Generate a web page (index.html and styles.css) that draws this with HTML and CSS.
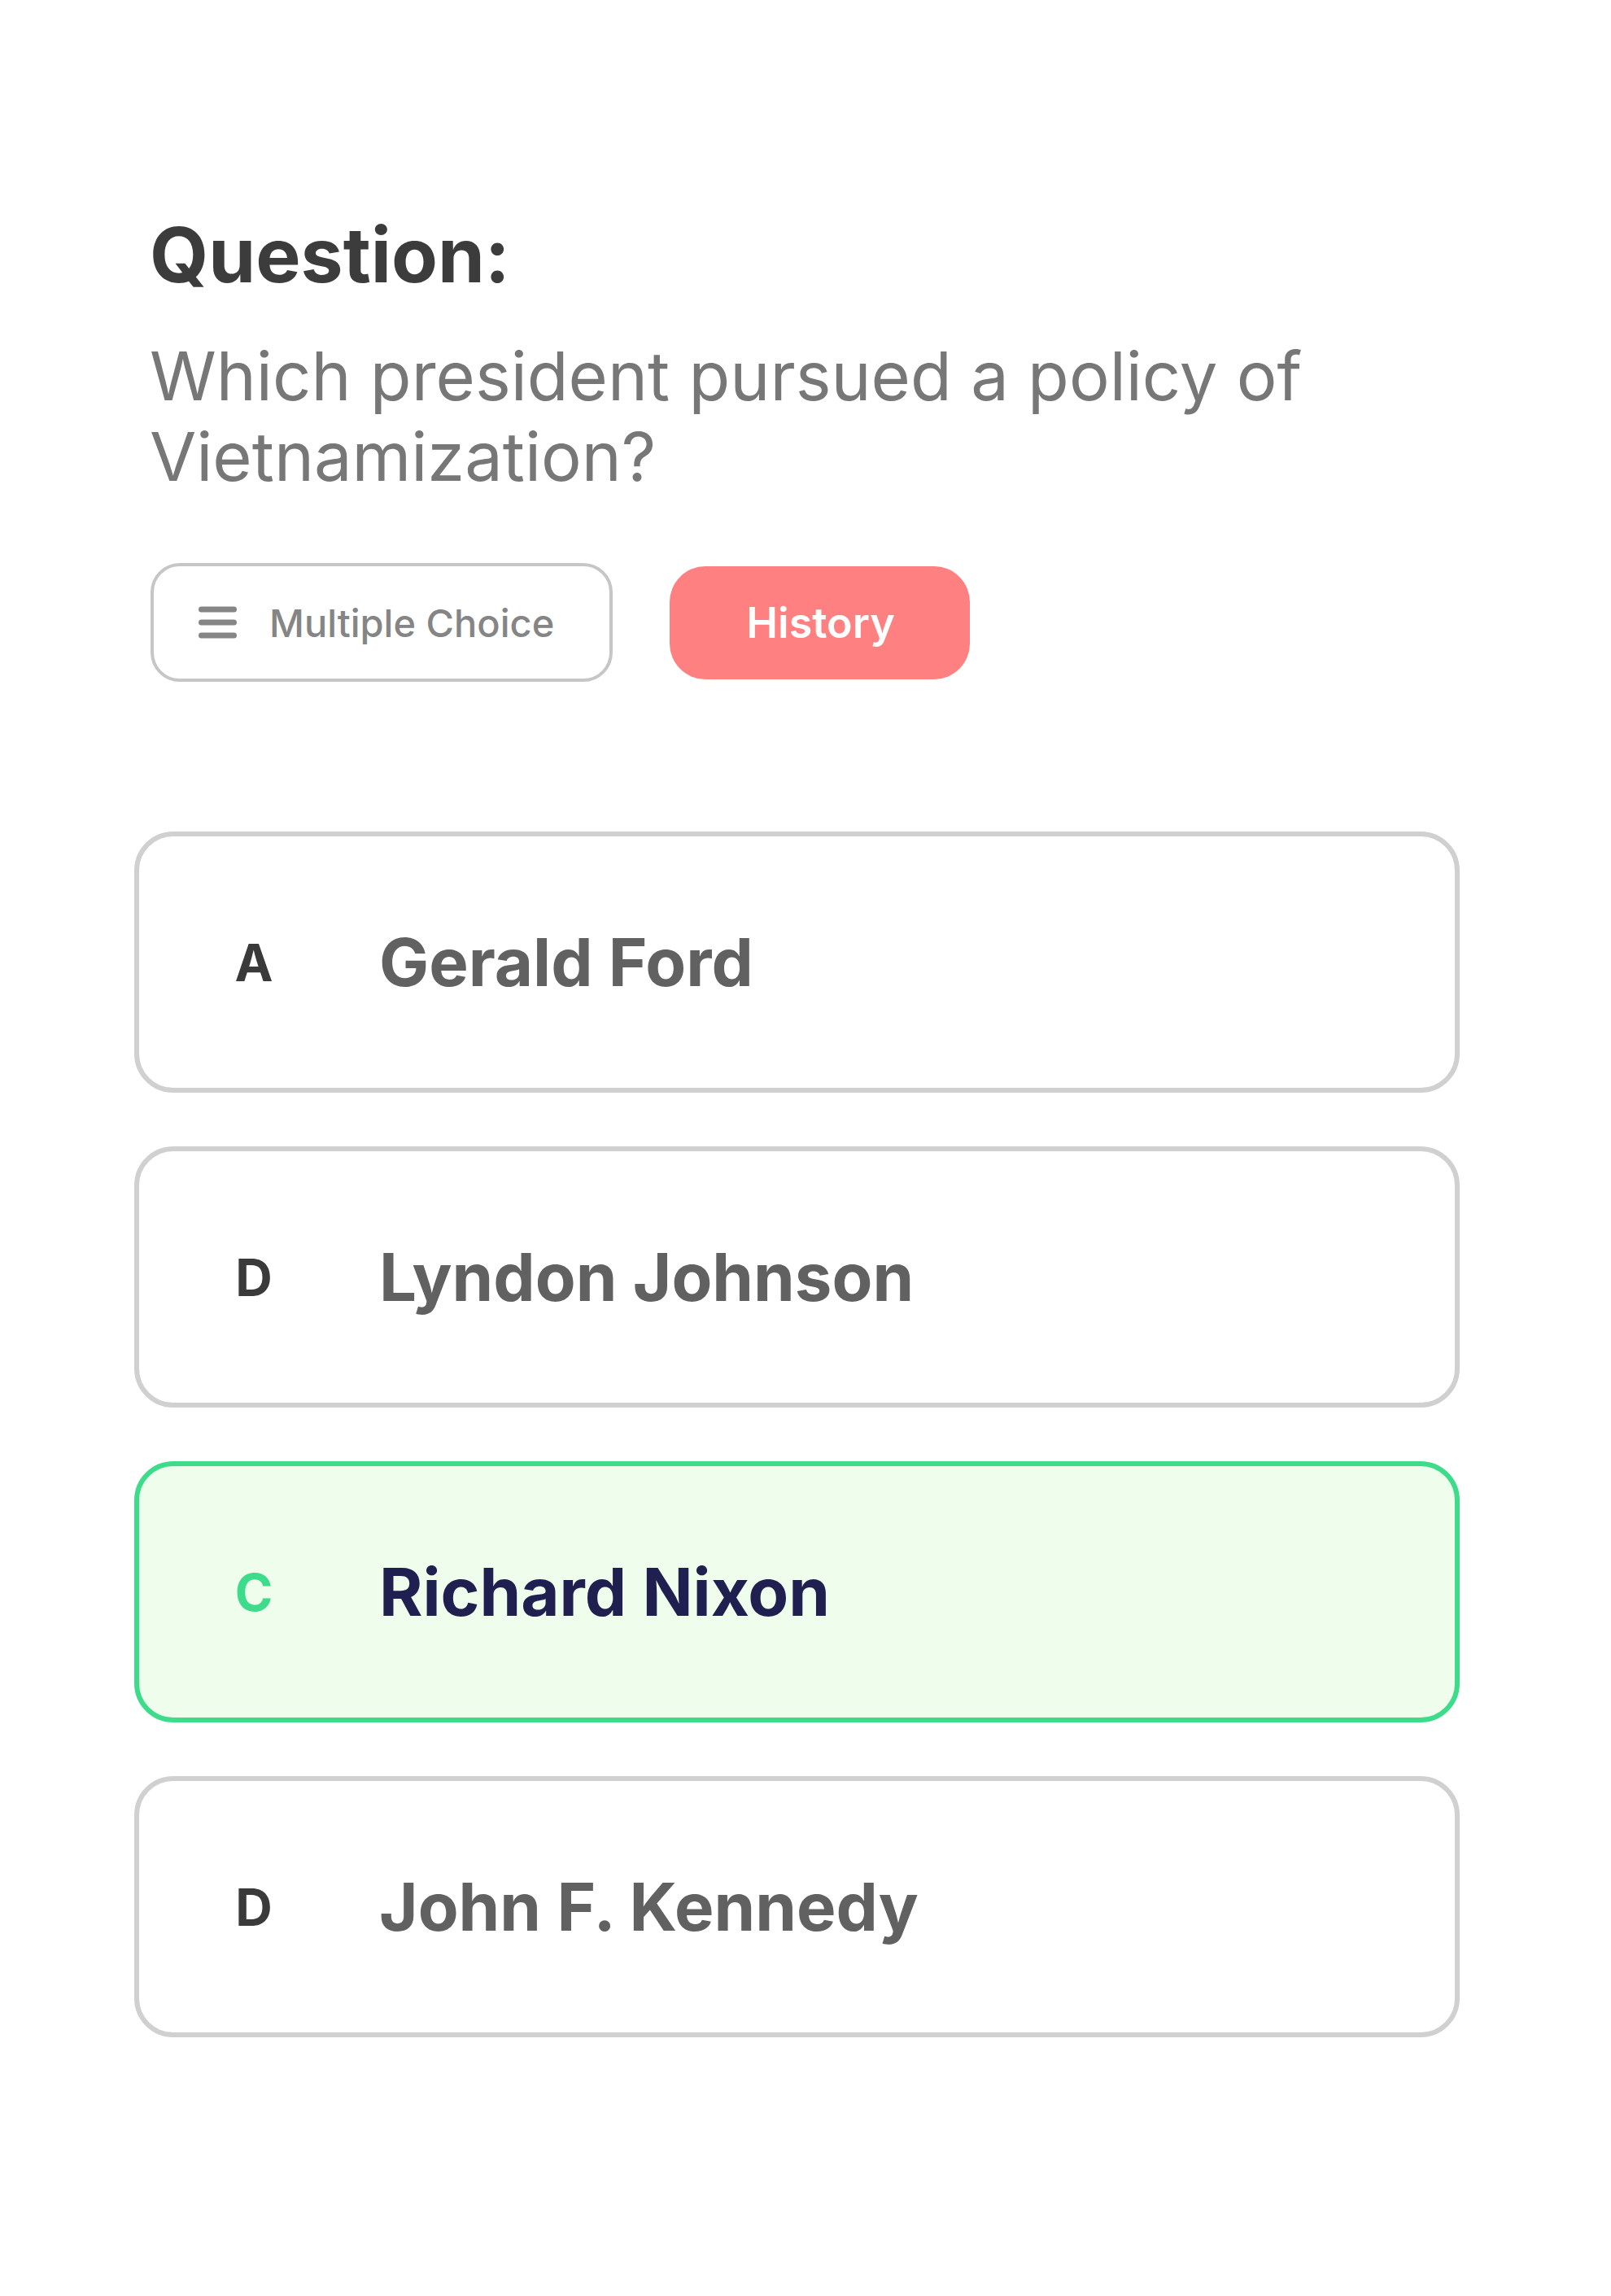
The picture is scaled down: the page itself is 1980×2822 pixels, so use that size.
FILE: index.html
```html
<!DOCTYPE html>
<html lang="en">
<head>
<meta charset="utf-8">
<title>Question</title>
<link rel="stylesheet" href="styles.css">
</head>
<body>
<main class="page">
  <section class="header">
    <h1 class="title">Question:</h1>
    <p class="question">Which president pursued a policy of Vietnamization?</p>
    <div class="tags">
      <div class="tag tag-type">
        <svg class="tag-icon" width="47" height="40" viewBox="0 0 47 40" aria-hidden="true">
          <line x1="3.5" y1="4" x2="43.5" y2="4" stroke="#858585" stroke-width="7" stroke-linecap="round"/>
          <line x1="3.5" y1="20" x2="43.5" y2="20" stroke="#858585" stroke-width="7" stroke-linecap="round"/>
          <line x1="3.5" y1="36" x2="43.5" y2="36" stroke="#858585" stroke-width="7" stroke-linecap="round"/>
        </svg>
        <span class="tag-label">Multiple Choice</span>
      </div>
      <div class="tag tag-subject">History</div>
    </div>
  </section>
  <section class="options">
    <div class="option">
      <span class="option-letter">A</span>
      <span class="option-name">Gerald Ford</span>
    </div>
    <div class="option">
      <span class="option-letter">D</span>
      <span class="option-name">Lyndon Johnson</span>
    </div>
    <div class="option option-correct">
      <span class="option-letter">C</span>
      <span class="option-name">Richard Nixon</span>
    </div>
    <div class="option">
      <span class="option-letter">D</span>
      <span class="option-name">John F. Kennedy</span>
    </div>
  </section>
</main>
</body>
</html>
```

FILE: styles.css
```css
* {
  box-sizing: border-box;
}

html, body {
  margin: 0;
  padding: 0;
  background: #ffffff;
}

body {
  font-family: Inter, "Noto Sans", "Liberation Sans", sans-serif;
  width: 1980px;
  min-height: 2822px;
}

.page {
  padding: 256px 0 0 165px;
  width: 1794px;
}

.header {
  padding-left: 19px;
}

.title {
  margin: 0;
  font-size: 93px;
  line-height: 114px;
  font-weight: 700;
  color: #3c3c3c;
}

.question {
  margin: 43px 0 0 0;
  font-size: 83px;
  line-height: 99px;
  font-weight: 400;
  color: #777777;
  max-width: 1500px;
}

.tags {
  margin-top: 81px;
  display: flex;
  align-items: center;
  gap: 70px;
}

.tag {
  display: flex;
  align-items: center;
}

.tag-type {
  height: 146px;
  border: 4px solid #c6c6c6;
  border-radius: 36px;
  padding: 0 68px 0 55px;
  margin-left: 1px;
}

.tag-icon {
  display: block;
  flex: none;
}

.tag-label {
  margin-left: 40px;
  font-size: 47px;
  font-weight: 500;
  color: #858585;
}

.tag-subject {
  height: 139px;
  border-radius: 44px;
  padding: 0 92px 0 94px;
  background: #ff8080;
  color: #ffffff;
  font-size: 52px;
  font-weight: 600;
}

.options {
  margin-top: 184px;
  display: flex;
  flex-direction: column;
  gap: 66px;
}

.option {
  height: 321px;
  border: 6px solid #d0d0d0;
  border-radius: 48px;
  background: #ffffff;
  display: flex;
  align-items: center;
  padding-left: 101px;
}

.option-letter {
  width: 80px;
  text-align: center;
  font-size: 63px;
  font-weight: 700;
  color: #3a3a3a;
  flex: none;
}

.option-name {
  margin-left: 114px;
  font-size: 81.5px;
  font-weight: 700;
  color: #616161;
}

.option-correct {
  border-color: #3ddc8a;
  background: #effded;
}

.option-correct .option-letter {
  color: #3ddc8a;
}

.option-correct .option-name {
  color: #1f2050;
}
```
